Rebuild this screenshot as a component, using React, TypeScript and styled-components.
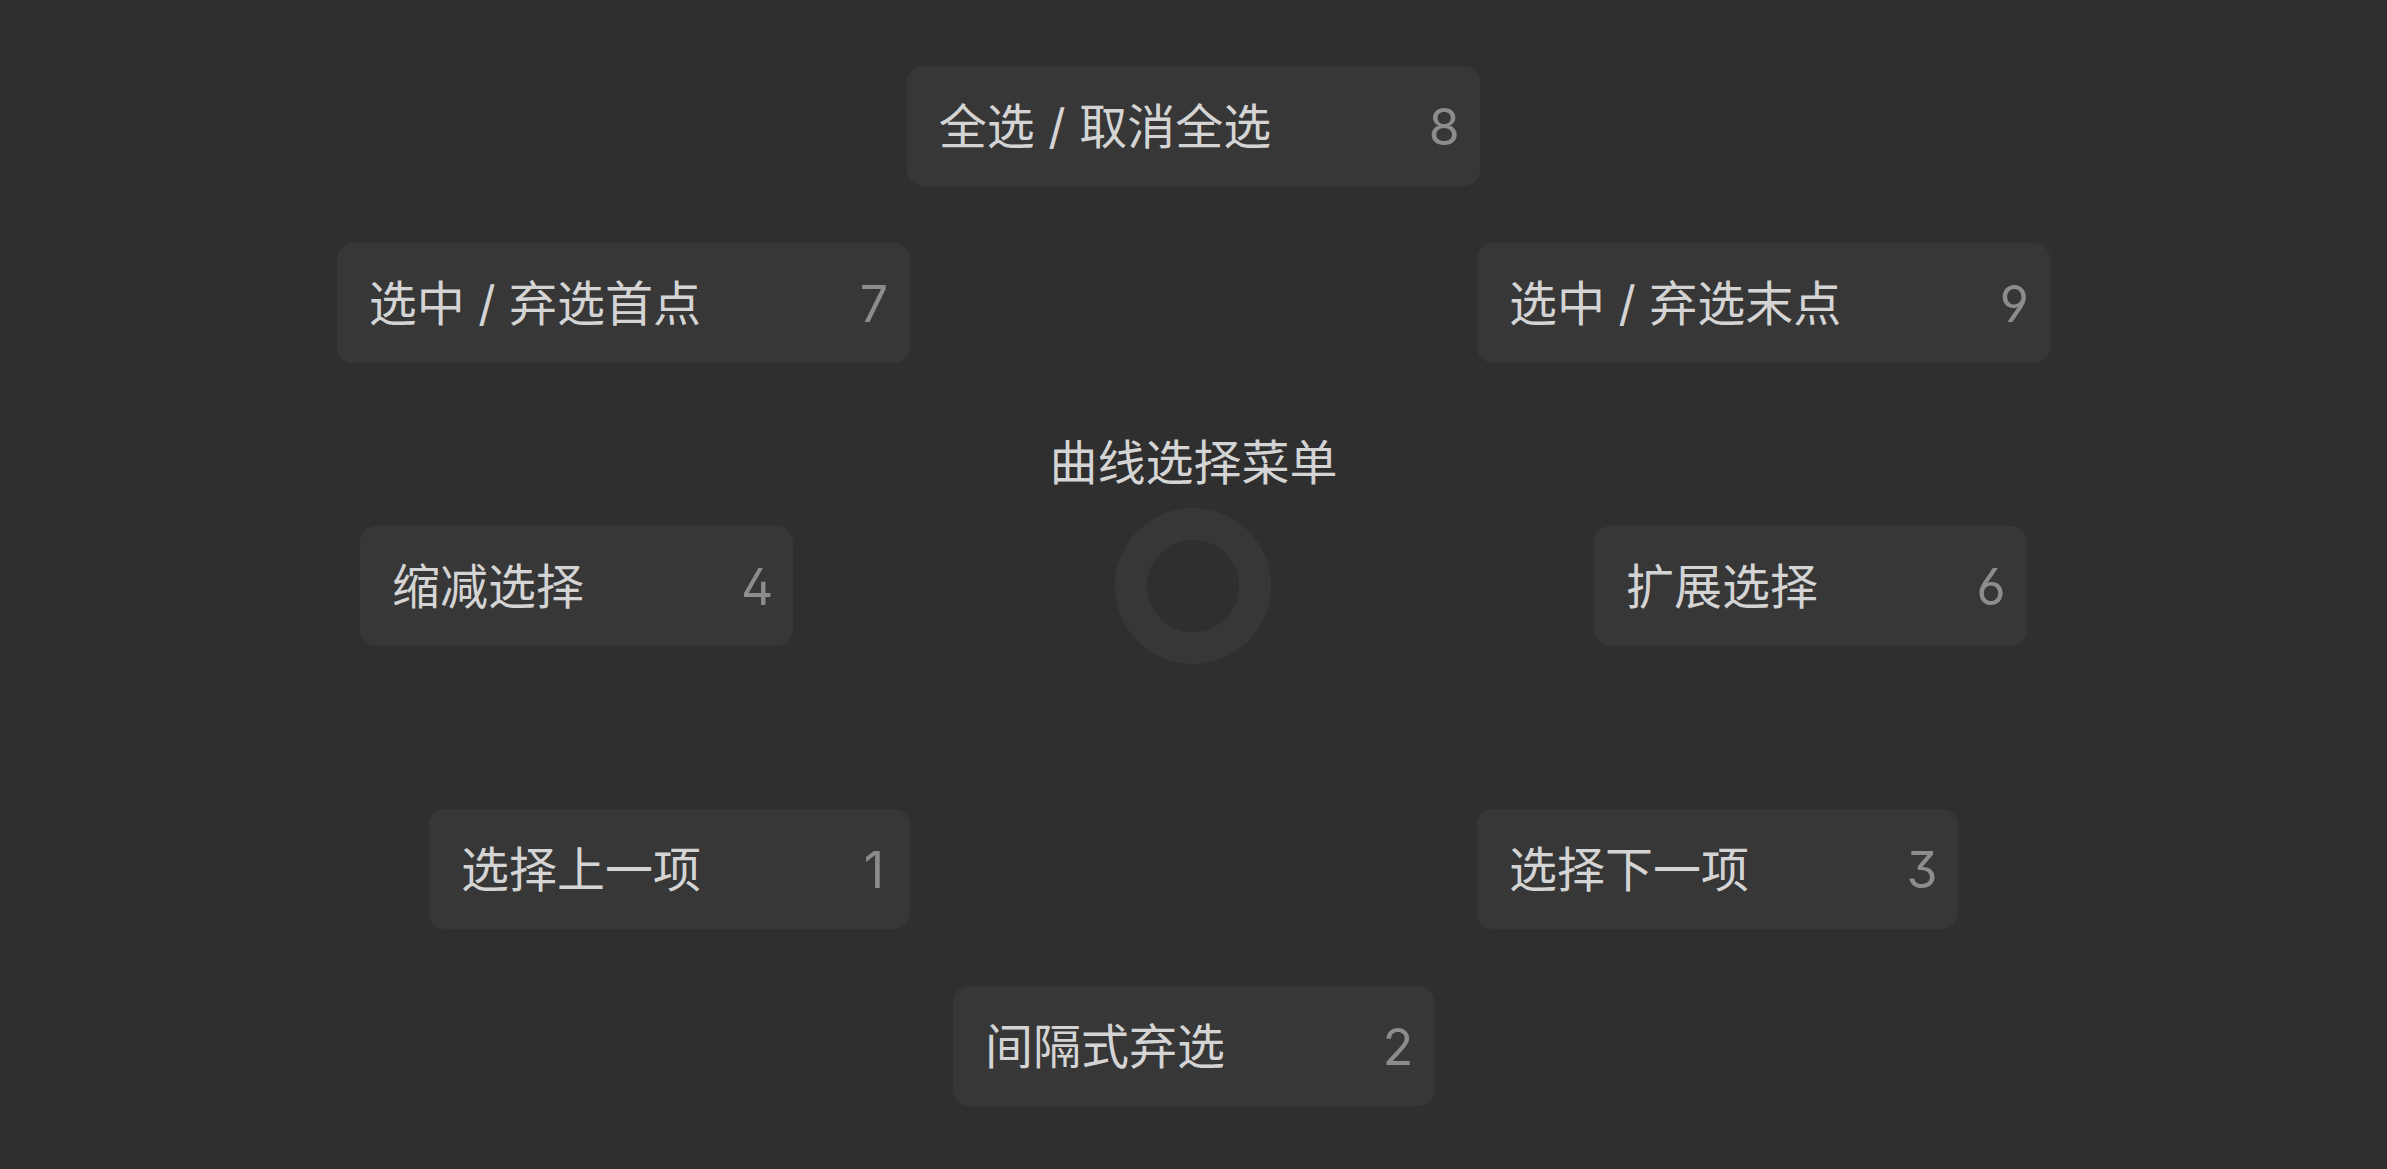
import styled, { createGlobalStyle } from "styled-components";

const GlobalStyle = createGlobalStyle`
  *, *::before, *::after {
    box-sizing: border-box;
  }

  body {
    margin: 0;
    background: #2f2f2f;
    color: #d4d4d4;
    font-family: Inter, "Noto Sans CJK SC", sans-serif;
    font-size: 48px;
    line-height: 64px;
  }
`;

const Menu = styled.main`
  display: flex;
  flex-direction: column;
  gap: 68px;
  min-height: 100vh;
  padding: 66px 32px 60px;
`;

const Arc = styled.div`
  display: flex;
  flex-direction: column;
  gap: 57px;
`;

const Row = styled.div<{ $spread?: number }>`
  display: grid;
  grid-template-columns: ${({ $spread }) =>
    $spread ? `1fr ${$spread}px 1fr` : "auto"};
  align-items: center;
  justify-items: center;
`;

const Item = styled.button<{ $side?: "left" | "right" }>`
  display: flex;
  align-items: center;
  justify-content: space-between;
  gap: 157px;
  height: 120px;
  padding: 2px 20px 0 32px;
  border: 0;
  border-radius: 16px;
  background: #373737;
  color: inherit;
  font: inherit;
  white-space: nowrap;
  cursor: pointer;
  grid-column: ${({ $side }) => ($side === "right" ? 3 : 1)};
  justify-self: ${({ $side }) =>
    $side === "left" ? "end" : $side === "right" ? "start" : "center"};

  &:hover {
    background: #404040;
  }
`;

const Key = styled.span`
  width: 32px;
  color: #8c8c8c;
  font-size: 50px;
  text-align: center;
  font-feature-settings: "cv02", "cv03", "cv04", "cv09";
`;

const Hub = styled.div`
  display: flex;
  flex-direction: column;
  align-items: center;
  gap: 13px;
  padding-bottom: 77px;
  grid-column: 2;
`;

const Title = styled.h1`
  margin: 0;
  font: inherit;
`;

const Ring = styled.div`
  width: 156px;
  height: 156px;
  border: 32px solid #373737;
  border-radius: 50%;
`;

type PieItemProps = {
  label: string;
  shortcut: number;
  side?: "left" | "right";
};

function PieItem({ label, shortcut, side }: PieItemProps) {
  return (
    <Item type="button" $side={side}>
      <span>{label}</span>
      <Key>{shortcut}</Key>
    </Item>
  );
}

export default function App() {
  return (
    <>
      <GlobalStyle />
      <Menu>
        <Arc>
          <Row>
            <PieItem label="全选 / 取消全选" shortcut={8} />
          </Row>
          <Row $spread={567}>
            <PieItem label="选中 / 弃选首点" shortcut={7} side="left" />
            <PieItem label="选中 / 弃选末点" shortcut={9} side="right" />
          </Row>
        </Arc>
        <Row $spread={801}>
          <PieItem label="缩减选择" shortcut={4} side="left" />
          <Hub>
            <Title>曲线选择菜单</Title>
            <Ring />
          </Hub>
          <PieItem label="扩展选择" shortcut={6} side="right" />
        </Row>
        <Arc>
          <Row $spread={567}>
            <PieItem label="选择上一项" shortcut={1} side="left" />
            <PieItem label="选择下一项" shortcut={3} side="right" />
          </Row>
          <Row>
            <PieItem label="间隔式弃选" shortcut={2} />
          </Row>
        </Arc>
      </Menu>
    </>
  );
}
